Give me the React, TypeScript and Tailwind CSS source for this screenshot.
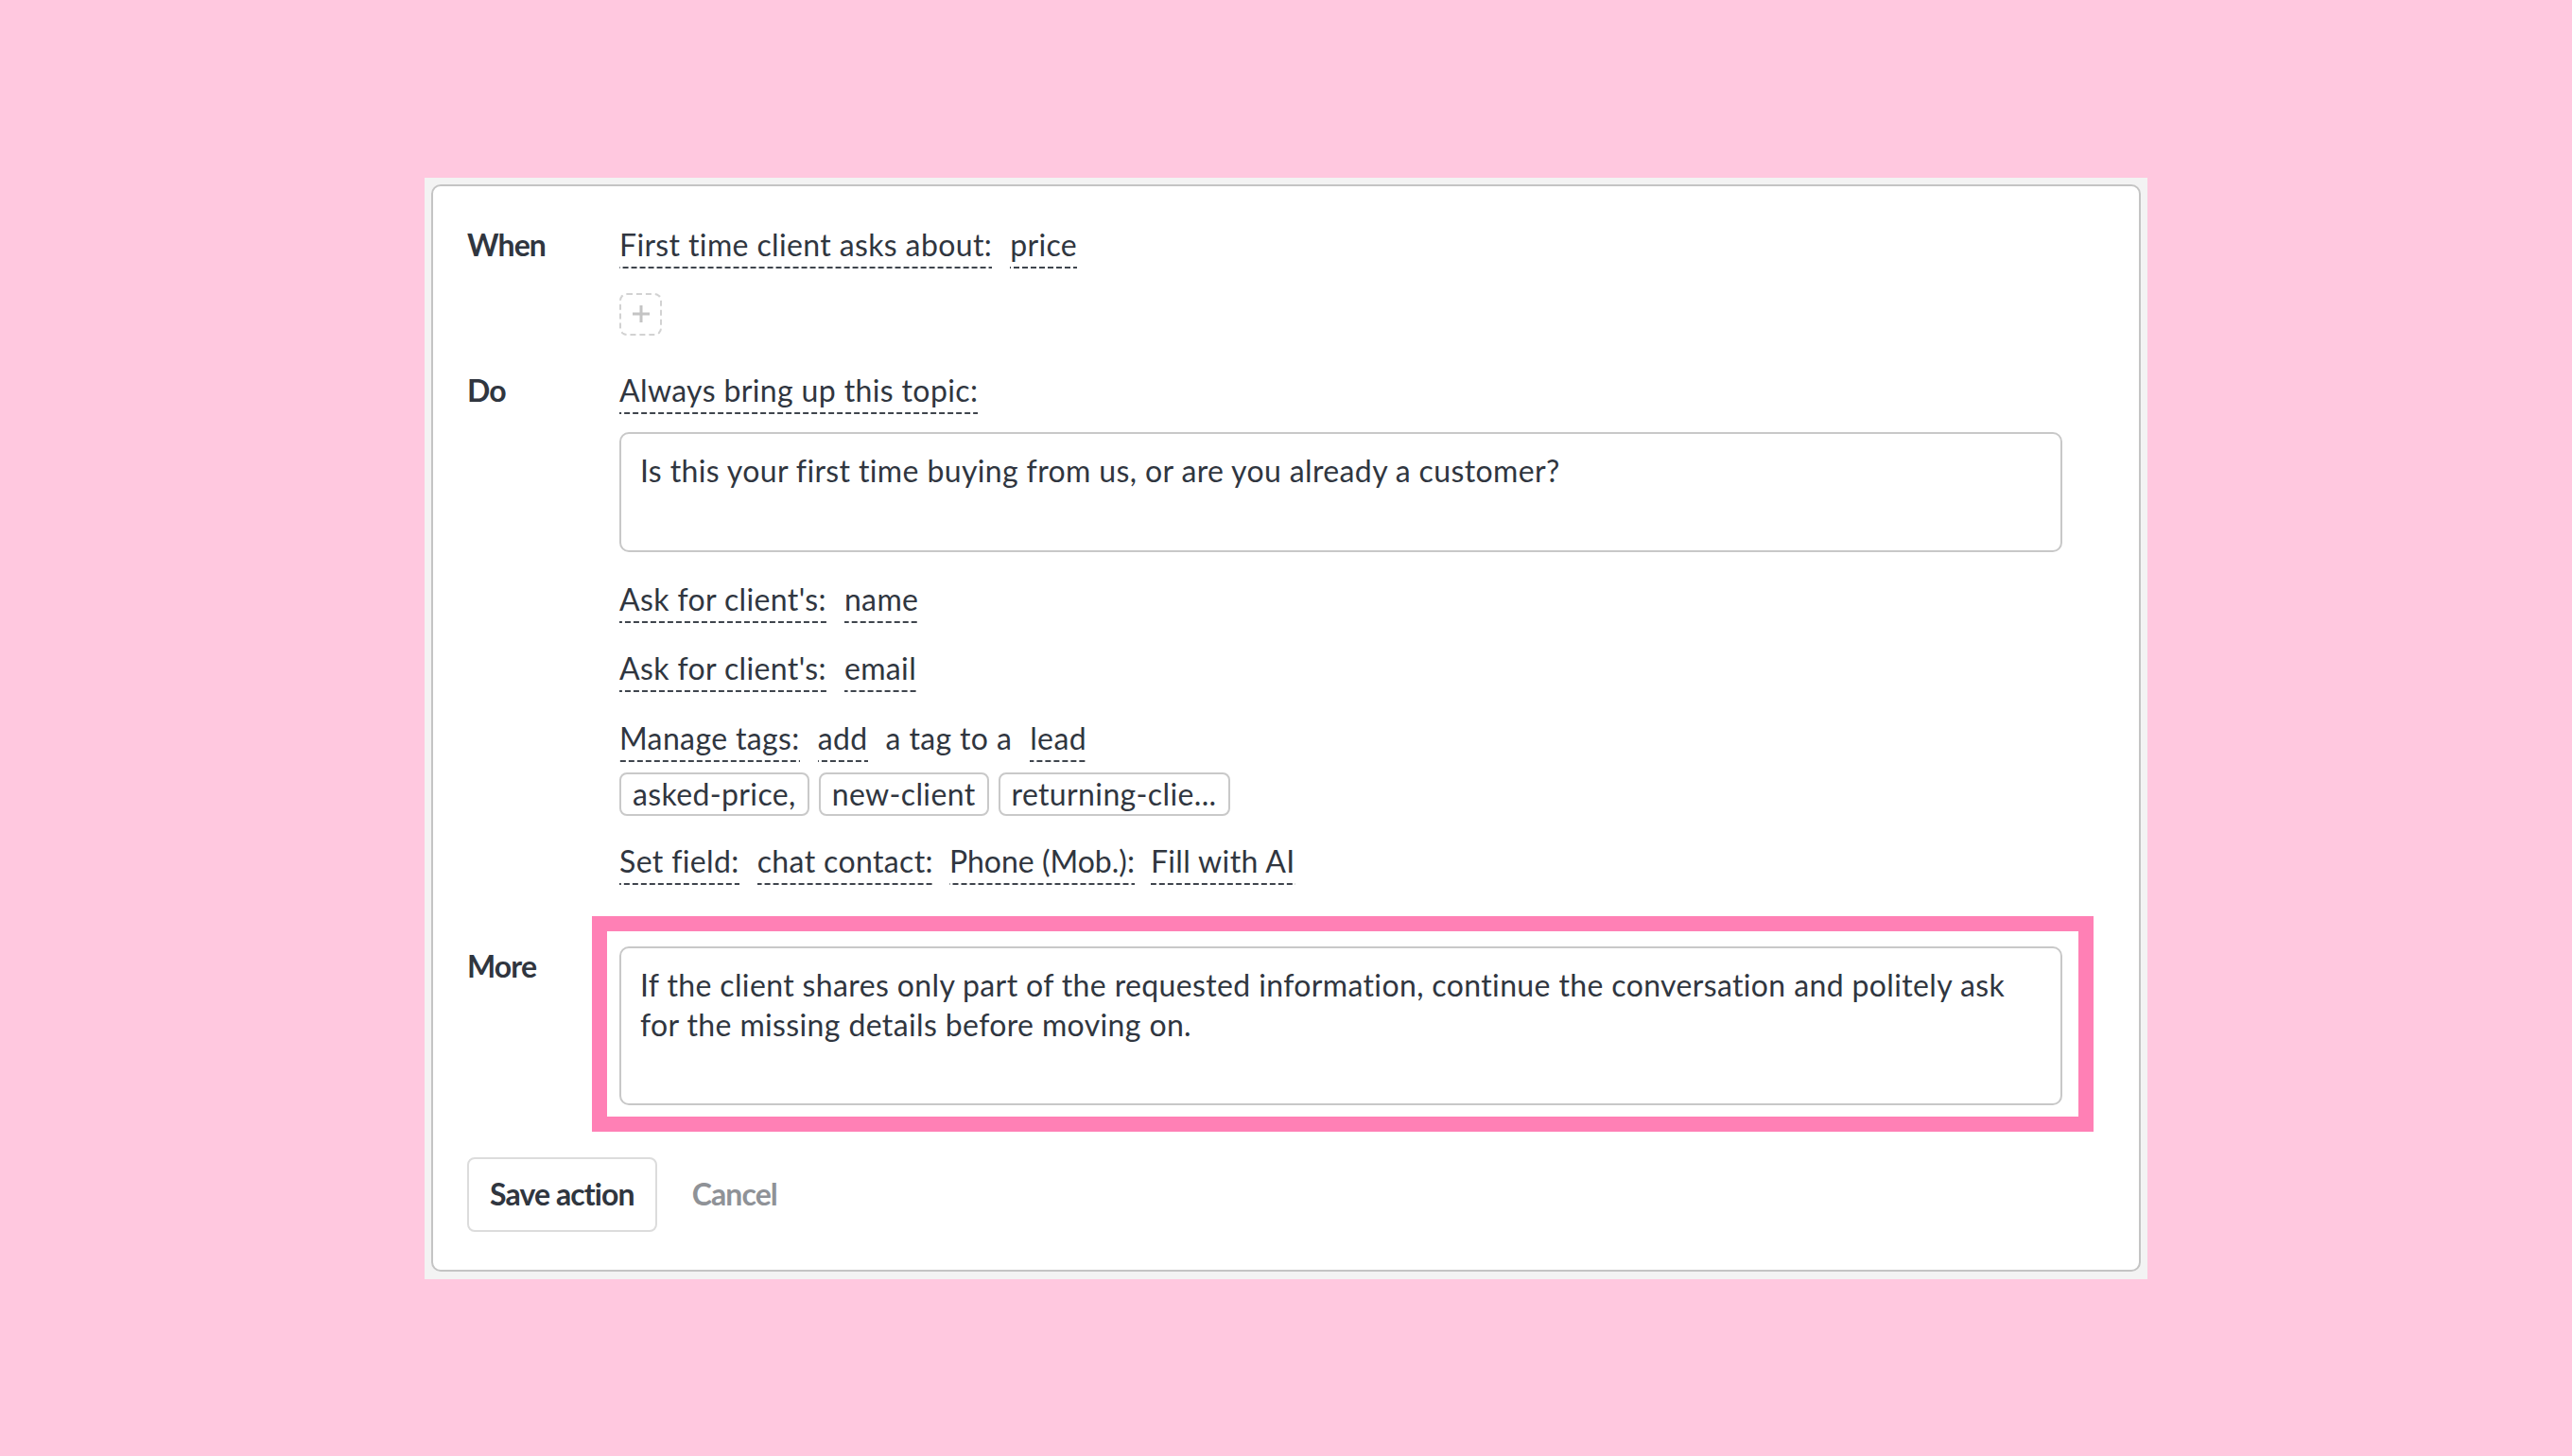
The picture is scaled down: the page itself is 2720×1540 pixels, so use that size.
import React from "react";

const dashCls =
  "inline-block whitespace-nowrap leading-[38px] pb-[6px] bg-[linear-gradient(to_right,#3f454d_67%,transparent_67%)] bg-[length:9px_2px] bg-repeat-x bg-bottom";
const plainCls = "inline-block whitespace-nowrap leading-[38px] pb-[6px]";

function D({ children, className = "" }: { children: React.ReactNode; className?: string }) {
  return <span className={`${dashCls} ${className}`}>{children}</span>;
}

function P({ children }: { children: React.ReactNode }) {
  return <span className={plainCls}>{children}</span>;
}

function Line({ children, className = "" }: { children: React.ReactNode; className?: string }) {
  return <div className={`flex items-start gap-[19px] ${className}`}>{children}</div>;
}

function Tag({ children }: { children: React.ReactNode }) {
  return (
    <span className="inline-block whitespace-nowrap h-[46px] leading-[42px] px-[12px] rounded-[8px] border-2 border-[#c9c9c9]">
      {children}
    </span>
  );
}

export default function App() {
  return (
    <div className="min-h-screen w-full bg-[#ffc8df] flex items-center justify-center font-['Lato',sans-serif] text-[32px] tracking-[0.37px] text-[#30363f]">
      <div className="w-[1822px] bg-[#f3f3f3] pt-[7px] px-[7px] pb-[8px]">
        <div className="bg-white border-2 border-[#c4c4c4] rounded-[10px] pt-[43px] pb-[40px] pl-[36px] pr-[81px]">
          {/* When */}
          <div className="flex">
            <div className="w-[161px] shrink-0 font-bold tracking-[-0.9px] leading-[38px]">When</div>
            <div className="flex-1">
              <Line>
                <D>First time client asks about:</D>
                <D>price</D>
              </Line>
              <div className="mt-[26px] w-[45px] h-[45px] border-2 border-dashed border-[#d2d2d2] rounded-[8px] flex items-center justify-center">
                <svg width="20" height="20" viewBox="0 0 20 20">
                  <rect x="8.5" y="1" width="3" height="18" fill="#c4c4c4" />
                  <rect x="1" y="8.5" width="18" height="3" fill="#c4c4c4" />
                </svg>
              </div>
            </div>
          </div>

          {/* Do */}
          <div className="flex mt-[39px]">
            <div className="w-[161px] shrink-0 font-bold tracking-[-0.9px] leading-[38px]">Do</div>
            <div className="flex-1">
              <Line>
                <D>Always bring up this topic:</D>
              </Line>
              <div className="mt-[19px] h-[127px] border-2 border-[#c8c8c8] rounded-[10px] pt-[18px] px-[20px] leading-[42px] whitespace-nowrap">
                Is this your first time buying from us, or are you already a customer?
              </div>
              <Line className="mt-[31px]">
                <D>Ask for client's:</D>
                <D>name</D>
              </Line>
              <Line className="mt-[29px]">
                <D>Ask for client's:</D>
                <D>email</D>
              </Line>
              <Line className="mt-[30px]">
                <D>Manage tags:</D>
                <D>add</D>
                <P>a tag to a</P>
                <D>lead</D>
              </Line>
              <div className="mt-[11px] flex gap-[10px]">
                <Tag>asked-price,</Tag>
                <Tag>new-client</Tag>
                <Tag>returning-clie...</Tag>
              </div>
              <div className="mt-[29px] flex items-start">
                <D>Set field:</D>
                <D className="ml-[19px]">chat contact:</D>
                <D className="ml-[17px] tracking-[0px]">Phone (Mob.):</D>
                <D className="ml-[17px]">Fill with AI</D>
              </div>
            </div>
          </div>

          {/* More */}
          <div className="flex mt-[65px]">
            <div className="w-[161px] shrink-0 font-bold tracking-[-0.9px] leading-[38px] pt-[2px]">More</div>
            <div className="flex-1">
              <div className="relative h-[168px] border-2 border-[#c8c8c8] rounded-[10px] pt-[18px] px-[20px] leading-[42px] whitespace-nowrap">
                If the client shares only part of the requested information, continue the conversation and politely ask
                <br />
                for the missing details before moving on.
                <div className="pointer-events-none absolute -top-[34px] -left-[31px] -right-[35px] -bottom-[30px] border-[16px] border-[#ff80b5]" />
              </div>
            </div>
          </div>

          {/* Buttons */}
          <div className="mt-[55px] flex items-center">
            <button className="h-[79px] px-[22px] border-2 border-[#dcdcdc] rounded-[8px] bg-white font-bold tracking-[-0.9px] text-[#30363f] leading-[38px]">
              Save action
            </button>
            <span className="ml-[37px] font-bold tracking-[-0.9px] text-[#8f9297] leading-[38px]">Cancel</span>
          </div>
        </div>
      </div>
    </div>
  );
}
